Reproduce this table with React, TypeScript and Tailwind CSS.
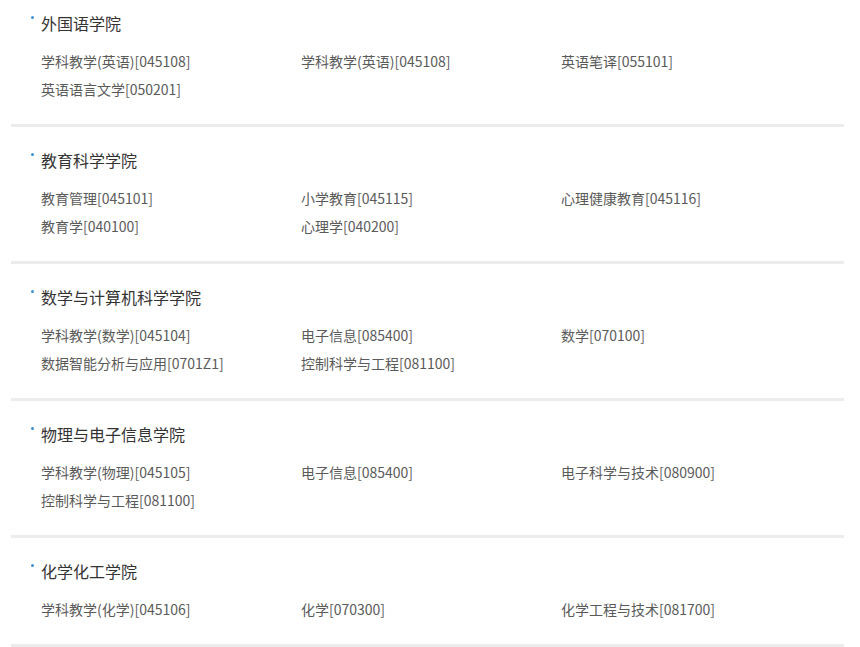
const colleges = [
  {
    name: '外国语学院',
    majors: ['学科教学(英语)[045108]', '学科教学(英语)[045108]', '英语笔译[055101]', '英语语言文学[050201]'],
  },
  {
    name: '教育科学学院',
    majors: ['教育管理[045101]', '小学教育[045115]', '心理健康教育[045116]', '教育学[040100]', '心理学[040200]'],
  },
  {
    name: '数学与计算机科学学院',
    majors: ['学科教学(数学)[045104]', '电子信息[085400]', '数学[070100]', '数据智能分析与应用[0701Z1]', '控制科学与工程[081100]'],
  },
  {
    name: '物理与电子信息学院',
    majors: ['学科教学(物理)[045105]', '电子信息[085400]', '电子科学与技术[080900]', '控制科学与工程[081100]'],
  },
  {
    name: '化学化工学院',
    majors: ['学科教学(化学)[045106]', '化学[070300]', '化学工程与技术[081700]'],
  },
];

const App = () => {
  return (
    <div
      className="w-[860px] h-[647px] overflow-hidden bg-white"
      style={{ fontFamily: '"Noto Sans CJK SC", "Noto Sans", sans-serif' }}
    >
      <div className="ml-[11px] w-[833px]">
        {colleges.map((college, i) => (
          <section
            key={college.name}
            className={`${i === 0 ? 'pt-[13px]' : 'pt-[23px]'} pb-[21px] border-b-[3px] border-[#ececec]`}
          >
            <div className="flex items-start pl-[20px] h-[20px]">
              <span className="w-[3px] h-[3px] rounded-full bg-[#3d8fd1] mt-[3px] mr-[7px]"></span>
              <h2 className="text-[16px] leading-[20px] text-[#333]">{college.name}</h2>
            </div>
            <ul className="grid grid-cols-[260px_260px_260px] pl-[30px] mt-[14px]">
              {college.majors.map((m, j) => (
                <li key={j} className="text-[14px] leading-[28px] text-[#5a5a5a] whitespace-nowrap">
                  {m}
                </li>
              ))}
            </ul>
          </section>
        ))}
      </div>
    </div>
  );
};

export default App;
